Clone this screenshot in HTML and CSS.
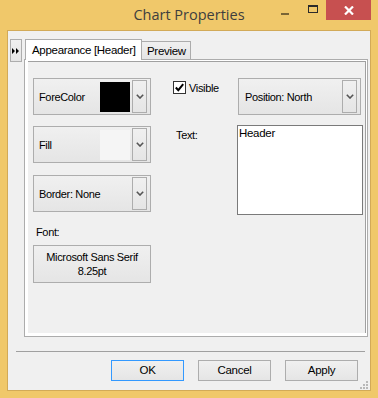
FILE: index.html
```html
<!DOCTYPE html>
<html>
<head>
<meta charset="utf-8">
<link rel="stylesheet" href="styles.css">
</head>
<body>
<div class="window">
  <div class="titlebar">
    <div class="title">Chart Properties</div>
    <div class="caption-buttons">
      <div class="cap-btn min"><span class="min-bar"></span></div>
      <div class="cap-btn max"><span class="max-box"></span></div>
      <div class="cap-btn close">
        <svg width="10" height="9" viewBox="0 0 10 9"><path d="M1 0.5 L9 8.5 M9 0.5 L1 8.5" stroke="#fff" stroke-width="2.2" fill="none"/></svg>
      </div>
    </div>
  </div>
  <div class="client">
    <div class="top-row">
      <div class="collapse-btn">
        <svg width="8" height="6" viewBox="0 0 8 6"><path d="M0 0 L3 3 L0 6 Z M4 0 L7 3 L4 6 Z" fill="#000"/></svg>
      </div>
      <div class="tabcontrol">
        <div class="tabs">
          <div class="tab active">Appearance [Header]</div>
          <div class="tab">Preview</div>
        </div>
        <div class="panel">
          <div class="page">
            <div class="left-col">
              <div class="dd-btn">
                <span class="dd-label">ForeColor</span>
                <span class="swatch black"></span>
                <span class="dd-arrow"><svg width="8" height="5" viewBox="0 0 8 5"><path d="M0.8 0.8 L4 4 L7.2 0.8" stroke="#555" stroke-width="1.6" fill="none"/></svg></span>
              </div>
              <div class="dd-btn">
                <span class="dd-label">Fill</span>
                <span class="swatch light"></span>
                <span class="dd-arrow"><svg width="8" height="5" viewBox="0 0 8 5"><path d="M0.8 0.8 L4 4 L7.2 0.8" stroke="#555" stroke-width="1.6" fill="none"/></svg></span>
              </div>
              <div class="dd-btn">
                <span class="dd-label">Border: None</span>
                <span class="dd-arrow"><svg width="8" height="5" viewBox="0 0 8 5"><path d="M0.8 0.8 L4 4 L7.2 0.8" stroke="#555" stroke-width="1.6" fill="none"/></svg></span>
              </div>
              <div class="font-label">Font:</div>
              <div class="font-btn">Microsoft Sans Serif<br>8.25pt</div>
            </div>
            <div class="right-col">
              <div class="right-row">
                <label class="check">
                  <span class="check-box"><svg width="11" height="11" viewBox="0 0 11 11"><path d="M1.8 5.5 L4.3 8.2 L9.2 2.2" stroke="#000" stroke-width="2" fill="none"/></svg></span>
                  <span>Visible</span>
                </label>
                <div class="dd-btn pos">
                  <span class="dd-label">Position: North</span>
                  <span class="dd-arrow"><svg width="8" height="5" viewBox="0 0 8 5"><path d="M0.8 0.8 L4 4 L7.2 0.8" stroke="#555" stroke-width="1.6" fill="none"/></svg></span>
                </div>
              </div>
              <div class="right-row second">
                <div class="text-label">Text:</div>
                <div class="textbox">Header</div>
              </div>
            </div>
          </div>
        </div>
      </div>
    </div>
    <div class="separator"></div>
    <div class="buttons">
      <div class="btn default">OK</div>
      <div class="btn">Cancel</div>
      <div class="btn">Apply</div>
    </div>
    <svg class="grip" width="8" height="8" viewBox="0 0 8 8">
      <rect x="6" y="0" width="2" height="2" fill="#b8b8b8"/>
      <rect x="3" y="3" width="2" height="2" fill="#b8b8b8"/>
      <rect x="6" y="3" width="2" height="2" fill="#b8b8b8"/>
      <rect x="0" y="6" width="2" height="2" fill="#b8b8b8"/>
      <rect x="3" y="6" width="2" height="2" fill="#b8b8b8"/>
      <rect x="6" y="6" width="2" height="2" fill="#b8b8b8"/>
    </svg>
  </div>
</div>
</body>
</html>
```
FILE: styles.css
```css
* { box-sizing: border-box; }
html, body { margin: 0; padding: 0; }
body {
  width: 378px;
  height: 398px;
  overflow: hidden;
  font-family: "Liberation Sans", Arial, sans-serif;
  font-size: 11px;
  letter-spacing: -0.35px;
  color: #000;
}
.window {
  width: 378px;
  height: 398px;
  background: #f0c86a;
  padding: 0 7px 7px 7px;
  display: flex;
  flex-direction: column;
}
.titlebar {
  height: 30px;
  display: grid;
  grid-template-columns: 1fr auto 1fr;
  margin: 0 -7px;
}
.title {
  grid-column: 2;
  font-family: "Open Sans", "Liberation Sans", sans-serif;
  font-size: 14.5px;
  letter-spacing: 0;
  color: #3e3e3e;
  line-height: 30px;
}
.caption-buttons {
  grid-column: 3;
  justify-self: end;
  display: flex;
  height: 20px;
  margin-right: 7px;
}
.cap-btn {
  height: 20px;
  display: flex;
  align-items: center;
  justify-content: center;
}
.cap-btn.min { width: 26px; }
.cap-btn.max { width: 26px; }
.cap-btn.close { width: 45px; background: #c75050; }
.min-bar {
  width: 8px;
  height: 2px;
  background: #7a6535;
  margin-top: 7px;
  margin-left: -4px;
}
.max-box {
  width: 10px;
  height: 8px;
  border: 1px solid #2b2b2b;
  border-top-width: 2px;
  margin-top: -2px;
}
.client {
  flex: 1;
  position: relative;
  background: #f0f0f0;
  border: 1px solid #d2aa58;
  display: flex;
  flex-direction: column;
}
.top-row {
  display: flex;
  padding: 8px 0 0 2px;
}
.collapse-btn {
  width: 12px;
  height: 23px;
  border: 1px solid #adadad;
  background: linear-gradient(#f0f0f0, #e5e5e5);
  display: flex;
  align-items: center;
  justify-content: center;
}
.tabcontrol {
  margin-left: 2px;
  width: 344px;
  display: flex;
  flex-direction: column;
}
.tabs {
  display: flex;
  align-items: flex-end;
  height: 20px;
  padding-left: 1px;
  position: relative;
  z-index: 1;
}
.tab {
  height: 18px;
  border: 1px solid #acacac;
  border-bottom: none;
  background: linear-gradient(#f0f0f0, #e5e5e5);
  padding: 1px 4px 0 5px;
  line-height: 17px;
  font-size: 11.5px;
  letter-spacing: -0.3px;
  margin-left: -1px;
}
.tab.active {
  width: 117px;
  height: 21px;
  margin-bottom: -1px;
  background: #fff;
  padding: 1px 0 0 6px;
  line-height: 19px;
  margin-left: 0;
}
.panel {
  height: 278px;
  border: 1px solid #acacac;
  background: #fff;
  padding: 1px 1px 3px 3px;
  display: flex;
}
.page {
  flex: 1;
  background: #f0f0f0;
  border-top: 1px solid #a0a0a0;
  border-right: 1px solid #a0a0a0;
  display: flex;
  padding: 16px 0 0 5px;
}
.left-col {
  width: 118px;
  display: flex;
  flex-direction: column;
}
.dd-btn {
  height: 37px;
  border: 1px solid #adadad;
  background: linear-gradient(#f0f0f0, #e5e5e5);
  display: flex;
  align-items: center;
  padding: 0 3px 0 5px;
  margin-bottom: 11px;
}
.dd-btn + .dd-btn { margin-bottom: 12px; }
.dd-label { flex: 1; white-space: nowrap; }
.swatch {
  width: 30px;
  height: 30px;
  margin-right: 2px;
}
.swatch.black { background: #000; }
.swatch.light { background: #f5f5f5; }
.dd-arrow {
  width: 15px;
  height: 33px;
  border: 1px solid #adadad;
  background: linear-gradient(#f0f0f0, #e5e5e5);
  display: flex;
  align-items: center;
  justify-content: center;
}
.font-label {
  margin: 2px 0 0 3px;
  line-height: 13px;
  height: 19px;
}
.font-btn {
  height: 38px;
  border: 1px solid #adadad;
  background: linear-gradient(#f0f0f0, #e5e5e5);
  text-align: center;
  line-height: 14px;
  padding-top: 4px;
}
.right-col {
  margin-left: 22px;
  display: flex;
  flex-direction: column;
}
.right-row {
  display: flex;
}
.check {
  width: 65px;
  display: flex;
  align-items: center;
  height: 13px;
  margin-top: 3px;
}
.check-box {
  width: 13px;
  height: 13px;
  border: 1px solid #333;
  background: #fff;
  display: flex;
  align-items: center;
  justify-content: center;
  margin-right: 3px;
}
.dd-btn.pos {
  width: 123px;
  margin-bottom: 10px;
  padding-left: 6px;
}
.text-label {
  width: 64px;
  padding: 4px 0 0 3px;
}
.textbox {
  width: 126px;
  height: 90px;
  border: 1px solid #7a7a7a;
  background: #fff;
  padding: 1px 0 0 1px;
  font-size: 11.5px;
  letter-spacing: -0.3px;
}
.separator {
  height: 1px;
  background: #a0a0a0;
  margin: 14px 5px 0 8px;
}
.buttons {
  display: flex;
  justify-content: flex-end;
  gap: 14px;
  margin: 8px 12px 0 0;
}
.btn {
  width: 73px;
  height: 21px;
  border: 1px solid #adadad;
  background: linear-gradient(#f0f0f0, #e5e5e5);
  text-align: center;
  line-height: 19px;
  font-size: 11.5px;
  letter-spacing: -0.3px;
}
.btn.default { border-color: #3399ff; }
.grip {
  position: absolute;
  right: 2px;
  bottom: 1px;
}
```
